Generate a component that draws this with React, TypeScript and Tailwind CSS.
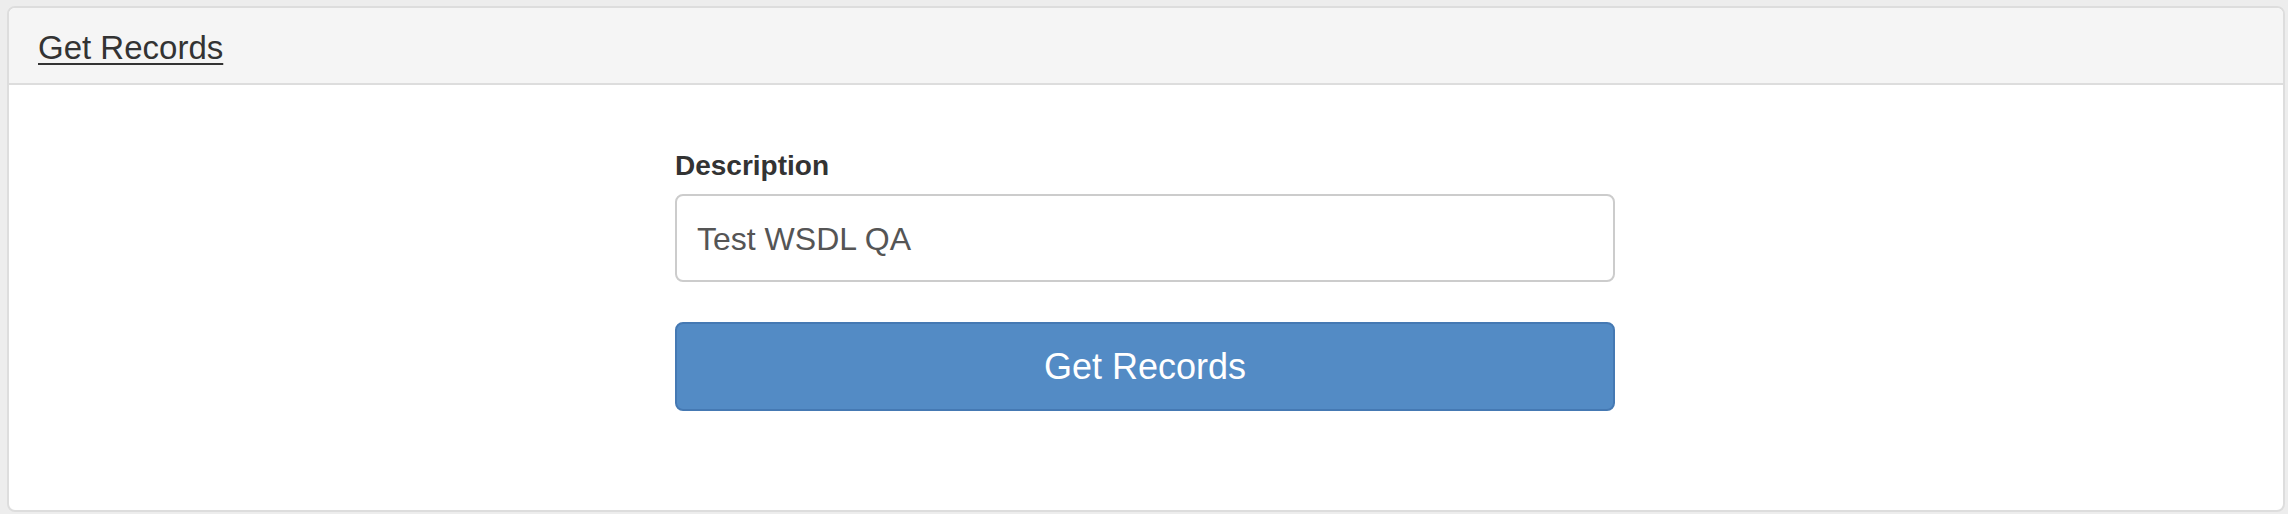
export default function App() {
  return (
    <div
      className="w-[2288px] h-[514px] bg-[#ededed] pt-[6px] pl-[7px] pr-[3px] pb-[2px]"
      style={{ fontFamily: '"Liberation Sans", Arial, sans-serif' }}
    >
      <div className="h-full bg-white border-2 border-[#dddddd] rounded-[8px] overflow-hidden flex flex-col">
        <div className="h-[77px] shrink-0 bg-[#f5f5f5] border-b-2 border-[#dddddd] flex items-center pl-[29px] pt-[4px]">
          <a className="text-[33px] leading-none text-[#333333] underline decoration-2 underline-offset-[4px] cursor-pointer">
            Get Records
          </a>
        </div>

        <div className="flex-1 flex justify-center pt-[61px] pr-[2px]">
          <div className="w-[940px] flex flex-col">
            <label className="text-[28px] leading-[40px] font-bold text-[#333333]">Description</label>
            <input
              className="mt-[8px] h-[88px] w-full border-2 border-[#cccccc] rounded-[8px] px-[20px] pt-[2px] text-[32px] text-[#555555] outline-none"
              defaultValue="Test WSDL QA"
            />
            <button className="mt-[40px] h-[89px] w-full bg-[#538bc5] border-2 border-[#4579b3] rounded-[8px] text-[36px] text-white">
              Get Records
            </button>
          </div>
        </div>
      </div>
    </div>
  );
}
